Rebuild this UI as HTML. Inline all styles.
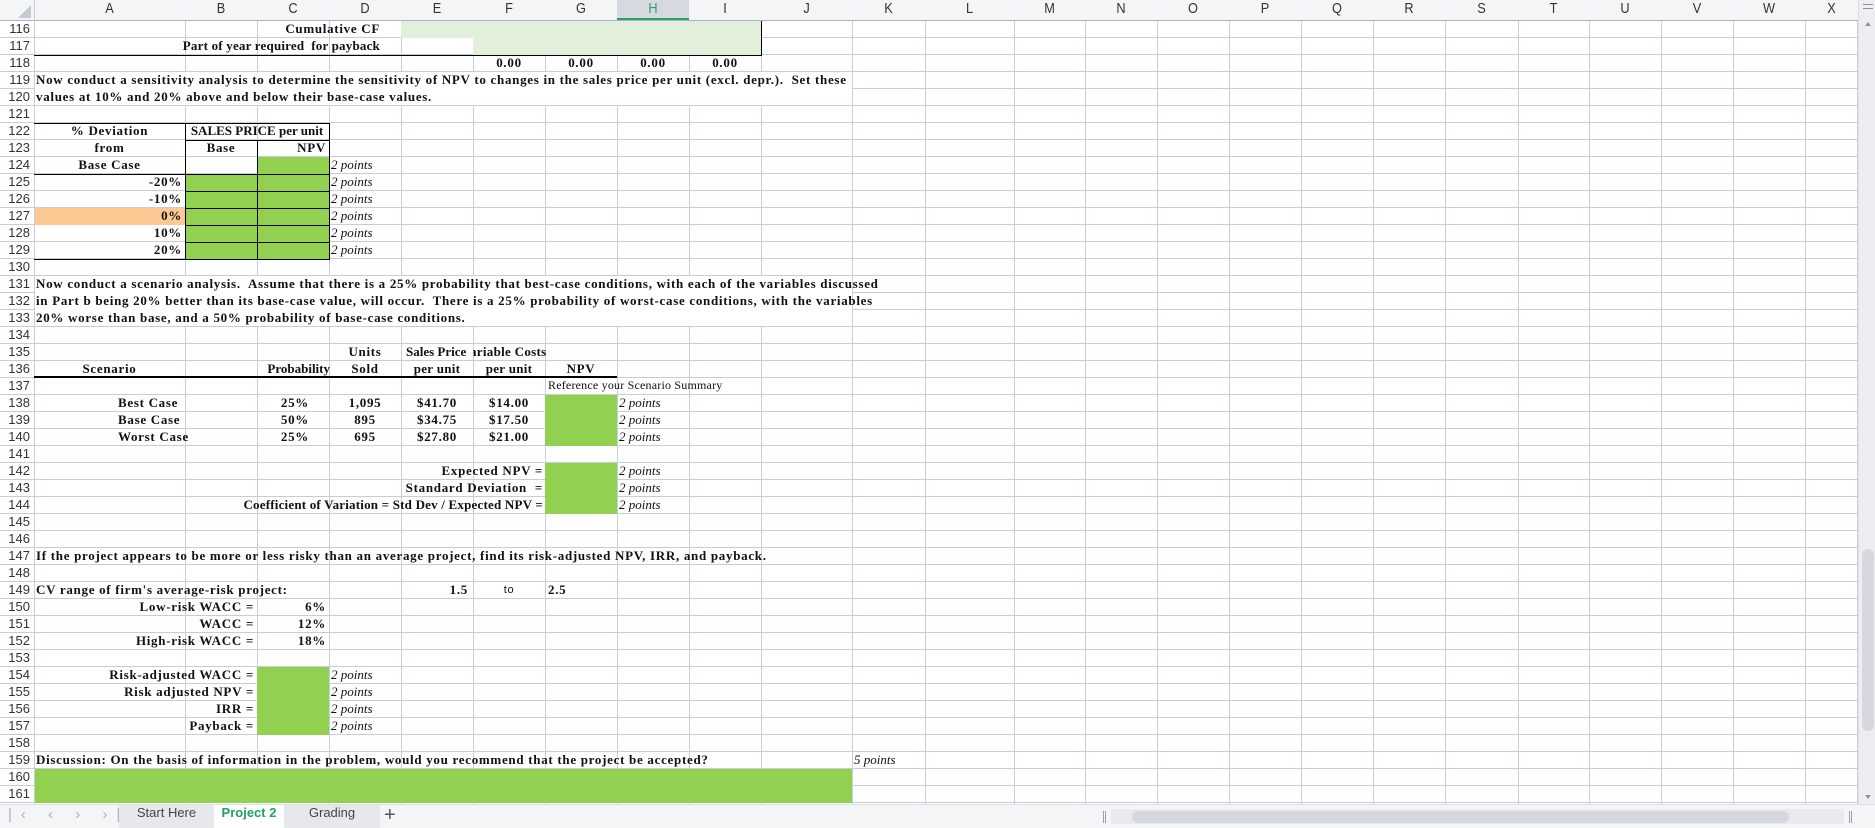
<!DOCTYPE html>
<html><head><meta charset="utf-8"><style>
*{margin:0;padding:0;box-sizing:border-box}
body{width:1875px;height:828px;overflow:hidden;background:#fff;position:relative;font-family:"Liberation Serif",serif}
.a{position:absolute}
.t{position:absolute;height:17px;line-height:17px;font:bold 13px "Liberation Serif",serif;letter-spacing:0.7px;white-space:nowrap;color:#111}
.i{position:absolute;height:17px;line-height:17px;font:italic 13px "Liberation Serif",serif;white-space:nowrap;color:#111;padding-left:2px}
.r{text-align:right;padding-right:3px}
.c{text-align:center}
.v{position:absolute;top:21px;height:783px;width:1px;background:#c8cedb}
.ch{position:absolute;top:0;height:21px;line-height:22px;font:15px "Liberation Sans",sans-serif;color:#333;text-align:center;transform:scaleX(.85)}
.rn{position:absolute;left:0;width:30px;height:17px;line-height:18px;font:13px "Liberation Sans",sans-serif;color:#333;text-align:right}
.g{position:absolute;background:#92d050}
.k{position:absolute;background:#000}
</style></head><body>
<div class="a" style="left:0;top:0;width:1858px;height:21px;background:#f4f5f7;border-bottom:1px solid #aab2c5"></div>
<div class="a" style="left:617px;top:0;width:72px;height:20px;background:#d6d9df"></div>
<div class="a" style="left:617px;top:18px;width:72px;height:2px;background:#21a366"></div>
<svg class="a" style="left:18px;top:5px" width="13" height="13"><polygon points="13,0 13,13 0,13" fill="#c4c8cf"/></svg>
<div class="a" style="left:0;top:21px;width:1858px;height:783px;background:repeating-linear-gradient(to bottom,transparent 0,transparent 16px,#c5ccda 16px,#c5ccda 17px)"></div>
<div class="a" style="left:34px;top:0;width:1px;height:804px;background:#c8cedb"></div>
<div class="v" style="left:185px"></div><div class="v" style="left:257px"></div><div class="v" style="left:329px"></div><div class="v" style="left:401px"></div><div class="v" style="left:473px"></div><div class="v" style="left:545px"></div><div class="v" style="left:617px"></div><div class="v" style="left:689px"></div><div class="v" style="left:761px"></div><div class="v" style="left:852px"></div><div class="v" style="left:925px"></div><div class="v" style="left:1014px"></div><div class="v" style="left:1085px"></div><div class="v" style="left:1157px"></div><div class="v" style="left:1229px"></div><div class="v" style="left:1301px"></div><div class="v" style="left:1373px"></div><div class="v" style="left:1445px"></div><div class="v" style="left:1518px"></div><div class="v" style="left:1589px"></div><div class="v" style="left:1661px"></div><div class="v" style="left:1733px"></div><div class="v" style="left:1805px"></div><div class="v" style="left:1857px"></div>
<div class="ch" style="left:34px;width:151px">A</div><div class="ch" style="left:185px;width:72px">B</div><div class="ch" style="left:257px;width:72px">C</div><div class="ch" style="left:329px;width:72px">D</div><div class="ch" style="left:401px;width:72px">E</div><div class="ch" style="left:473px;width:72px">F</div><div class="ch" style="left:545px;width:72px">G</div><div class="ch" style="left:617px;width:72px;color:#21a366">H</div><div class="ch" style="left:689px;width:72px">I</div><div class="ch" style="left:761px;width:91px">J</div><div class="ch" style="left:852px;width:73px">K</div><div class="ch" style="left:925px;width:89px">L</div><div class="ch" style="left:1014px;width:71px">M</div><div class="ch" style="left:1085px;width:72px">N</div><div class="ch" style="left:1157px;width:72px">O</div><div class="ch" style="left:1229px;width:72px">P</div><div class="ch" style="left:1301px;width:72px">Q</div><div class="ch" style="left:1373px;width:72px">R</div><div class="ch" style="left:1445px;width:73px">S</div><div class="ch" style="left:1518px;width:71px">T</div><div class="ch" style="left:1589px;width:72px">U</div><div class="ch" style="left:1661px;width:72px">V</div><div class="ch" style="left:1733px;width:72px">W</div><div class="ch" style="left:1805px;width:53px">X</div>
<div class="rn" style="top:21px">116</div><div class="rn" style="top:38px">117</div><div class="rn" style="top:55px">118</div><div class="rn" style="top:72px">119</div><div class="rn" style="top:89px">120</div><div class="rn" style="top:106px">121</div><div class="rn" style="top:123px">122</div><div class="rn" style="top:140px">123</div><div class="rn" style="top:157px">124</div><div class="rn" style="top:174px">125</div><div class="rn" style="top:191px">126</div><div class="rn" style="top:208px">127</div><div class="rn" style="top:225px">128</div><div class="rn" style="top:242px">129</div><div class="rn" style="top:259px">130</div><div class="rn" style="top:276px">131</div><div class="rn" style="top:293px">132</div><div class="rn" style="top:310px">133</div><div class="rn" style="top:327px">134</div><div class="rn" style="top:344px">135</div><div class="rn" style="top:361px">136</div><div class="rn" style="top:378px">137</div><div class="rn" style="top:395px">138</div><div class="rn" style="top:412px">139</div><div class="rn" style="top:429px">140</div><div class="rn" style="top:446px">141</div><div class="rn" style="top:463px">142</div><div class="rn" style="top:480px">143</div><div class="rn" style="top:497px">144</div><div class="rn" style="top:514px">145</div><div class="rn" style="top:531px">146</div><div class="rn" style="top:548px">147</div><div class="rn" style="top:565px">148</div><div class="rn" style="top:582px">149</div><div class="rn" style="top:599px">150</div><div class="rn" style="top:616px">151</div><div class="rn" style="top:633px">152</div><div class="rn" style="top:650px">153</div><div class="rn" style="top:667px">154</div><div class="rn" style="top:684px">155</div><div class="rn" style="top:701px">156</div><div class="rn" style="top:718px">157</div><div class="rn" style="top:735px">158</div><div class="rn" style="top:752px">159</div><div class="rn" style="top:769px">160</div><div class="rn" style="top:786px">161</div>

<div class="a" style="left:401px;top:21px;width:360px;height:17px;background:#e2efda"></div>
<div class="a" style="left:473px;top:38px;width:288px;height:17px;background:#e2efda"></div>
<div class="a" style="left:35px;top:72px;width:817px;height:33px;background:#fff"></div>
<div class="a" style="left:35px;top:276px;width:817px;height:50px;background:#fff"></div>
<div class="a" style="left:35px;top:208px;width:150px;height:17px;background:#fdc993"></div>
<div class="g" style="left:257px;top:157px;width:72px;height:17px"></div>
<div class="g" style="left:185px;top:174px;width:144px;height:85px"></div>
<div class="g" style="left:545px;top:395px;width:72px;height:51px"></div>
<div class="g" style="left:545px;top:463px;width:72px;height:51px"></div>
<div class="g" style="left:257px;top:667px;width:72px;height:68px"></div>
<div class="g" style="left:35px;top:769px;width:817px;height:34px"></div>

<div class="k" style="left:34px;top:55px;width:728px;height:1px"></div>
<div class="k" style="left:761px;top:21px;width:1px;height:35px"></div>
<div class="k" style="left:34px;top:123px;width:296px;height:1px"></div>
<div class="k" style="left:185px;top:123px;width:1px;height:137px"></div>
<div class="k" style="left:329px;top:123px;width:1px;height:137px"></div>
<div class="k" style="left:185px;top:140px;width:145px;height:1px"></div>
<div class="k" style="left:257px;top:140px;width:1px;height:120px"></div>
<div class="k" style="left:34px;top:174px;width:296px;height:1px"></div>
<div class="k" style="left:185px;top:191px;width:145px;height:1px"></div>
<div class="k" style="left:185px;top:208px;width:145px;height:1px"></div>
<div class="k" style="left:185px;top:225px;width:145px;height:1px"></div>
<div class="k" style="left:185px;top:242px;width:145px;height:1px"></div>
<div class="k" style="left:34px;top:259px;width:296px;height:1px"></div>
<div class="k" style="left:34px;top:376px;width:583px;height:2px"></div>

<div class="t r" style="left:185px;top:21px;width:198px">Cumulative CF</div>
<div class="t r" style="left:150px;top:38px;width:233px;letter-spacing:0.2px">Part of year required&nbsp; for payback</div>
<div class="t c" style="left:473px;top:55px;width:72px">0.00</div><div class="t c" style="left:545px;top:55px;width:72px">0.00</div><div class="t c" style="left:617px;top:55px;width:72px">0.00</div><div class="t c" style="left:689px;top:55px;width:72px">0.00</div>
<div class="t" style="left:36px;top:72px">Now conduct a sensitivity analysis to determine the sensitivity of NPV to changes in the sales price per unit (excl. depr.).&nbsp; Set these</div>
<div class="t" style="left:36px;top:89px">values at 10% and 20% above and below their base-case values.</div>
<div class="t c" style="left:34px;top:123px;width:151px">% Deviation</div>
<div class="t c" style="left:185px;top:123px;width:144px;letter-spacing:0">SALES PRICE per unit</div>
<div class="t c" style="left:34px;top:140px;width:151px">from</div>
<div class="t c" style="left:185px;top:140px;width:72px">Base</div>
<div class="t r" style="left:257px;top:140px;width:72px">NPV</div>
<div class="t c" style="left:34px;top:157px;width:151px">Base Case</div>
<div class="t r" style="left:34px;top:174px;width:151px">-20%</div>
<div class="t r" style="left:34px;top:191px;width:151px">-10%</div>
<div class="t r" style="left:34px;top:208px;width:151px">0%</div>
<div class="t r" style="left:34px;top:225px;width:151px">10%</div>
<div class="t r" style="left:34px;top:242px;width:151px">20%</div>
<div class="i" style="left:329px;top:157px">2 points</div><div class="i" style="left:329px;top:174px">2 points</div><div class="i" style="left:329px;top:191px">2 points</div><div class="i" style="left:329px;top:208px">2 points</div><div class="i" style="left:329px;top:225px">2 points</div><div class="i" style="left:329px;top:242px">2 points</div>
<div class="t" style="left:36px;top:276px">Now conduct a scenario analysis.&nbsp; Assume that there is a 25% probability that best-case conditions, with each of the variables discussed</div>
<div class="t" style="left:36px;top:293px">in Part b being 20% better than its base-case value, will occur.&nbsp; There is a 25% probability of worst-case conditions, with the variables</div>
<div class="t" style="left:36px;top:310px">20% worse than base, and a 50% probability of base-case conditions.</div>
<div class="t c" style="left:329px;top:344px;width:72px">Units</div>
<div class="t" style="left:406px;top:344px;width:67px;overflow:hidden;letter-spacing:0">Sales Price</div>
<div class="t" style="left:473px;top:344px;width:100px;overflow:hidden;text-indent:-3px;letter-spacing:0.3px">ariable Costs</div>
<div class="t c" style="left:34px;top:361px;width:151px">Scenario</div>
<div class="t r" style="left:240px;top:361px;width:92px;padding-right:2px;letter-spacing:0">Probability</div>
<div class="t c" style="left:329px;top:361px;width:72px">Sold</div>
<div class="t c" style="left:401px;top:361px;width:72px;letter-spacing:0.3px">per unit</div>
<div class="t c" style="left:473px;top:361px;width:72px;letter-spacing:0.3px">per unit</div>
<div class="t c" style="left:545px;top:361px;width:72px">NPV</div>
<div class="t" style="left:548px;top:378px;font-weight:normal;font-size:12px;letter-spacing:0.2px">Reference your Scenario Summary</div>
<div class="t" style="left:118px;top:395px">Best Case</div><div class="t" style="left:118px;top:412px">Base Case</div><div class="t" style="left:118px;top:429px">Worst Case</div>
<div class="t r" style="left:257px;top:395px;width:72px;padding-right:20px">25%</div><div class="t r" style="left:257px;top:412px;width:72px;padding-right:20px">50%</div><div class="t r" style="left:257px;top:429px;width:72px;padding-right:20px">25%</div>
<div class="t c" style="left:329px;top:395px;width:72px">1,095</div><div class="t c" style="left:329px;top:412px;width:72px">895</div><div class="t c" style="left:329px;top:429px;width:72px">695</div>
<div class="t c" style="left:401px;top:395px;width:72px">$41.70</div><div class="t c" style="left:401px;top:412px;width:72px">$34.75</div><div class="t c" style="left:401px;top:429px;width:72px">$27.80</div>
<div class="t c" style="left:473px;top:395px;width:72px">$14.00</div><div class="t c" style="left:473px;top:412px;width:72px">$17.50</div><div class="t c" style="left:473px;top:429px;width:72px">$21.00</div>
<div class="i" style="left:617px;top:395px">2 points</div><div class="i" style="left:617px;top:412px">2 points</div><div class="i" style="left:617px;top:429px">2 points</div>
<div class="t r" style="left:150px;top:463px;width:395px;padding-right:2px">Expected NPV =</div>
<div class="t r" style="left:150px;top:480px;width:395px;padding-right:2px">Standard Deviation&nbsp; =</div>
<div class="t r" style="left:150px;top:497px;width:395px;padding-right:2px;letter-spacing:0.2px">Coefficient of Variation = Std Dev / Expected NPV =</div>
<div class="i" style="left:617px;top:463px">2 points</div><div class="i" style="left:617px;top:480px">2 points</div><div class="i" style="left:617px;top:497px">2 points</div>
<div class="t" style="left:36px;top:548px">If the project appears to be more or less risky than an average project, find its risk-adjusted NPV, IRR, and payback.</div>
<div class="t" style="left:36px;top:582px">CV range of firm's average-risk project:</div>
<div class="t r" style="left:401px;top:582px;width:72px;padding-right:5px">1.5</div>
<div class="t c" style="left:473px;top:582px;width:72px;font:11px 'Liberation Sans',sans-serif;line-height:17px">to</div>
<div class="t" style="left:548px;top:582px">2.5</div>
<div class="t r" style="left:34px;top:599px;width:223px">Low-risk WACC =</div><div class="t r" style="left:34px;top:616px;width:223px">WACC =</div><div class="t r" style="left:34px;top:633px;width:223px">High-risk WACC =</div>
<div class="t r" style="left:257px;top:599px;width:72px">6%</div><div class="t r" style="left:257px;top:616px;width:72px">12%</div><div class="t r" style="left:257px;top:633px;width:72px">18%</div>
<div class="t r" style="left:34px;top:667px;width:223px">Risk-adjusted WACC =</div><div class="t r" style="left:34px;top:684px;width:223px">Risk adjusted NPV =</div><div class="t r" style="left:34px;top:701px;width:223px">IRR =</div><div class="t r" style="left:34px;top:718px;width:223px">Payback =</div>
<div class="i" style="left:329px;top:667px">2 points</div><div class="i" style="left:329px;top:684px">2 points</div><div class="i" style="left:329px;top:701px">2 points</div><div class="i" style="left:329px;top:718px">2 points</div>
<div class="t" style="left:36px;top:752px">Discussion: On the basis of information in the problem, would you recommend that the project be accepted?</div>
<div class="i" style="left:852px;top:752px">5 points</div>

<div class="a" style="left:1858px;top:0;width:17px;height:804px;background:#eceef2;border-left:1px solid #dde0e6"></div>
<div class="a" style="left:1863px;top:4px;width:10px;height:1px;background:#8c93a3"></div>
<div class="a" style="left:1863px;top:8px;width:10px;height:1px;background:#8c93a3"></div>
<div class="a" style="left:1862px;top:549px;width:12px;height:182px;background:#d5d8df;border-radius:6px"></div>
<svg class="a" style="left:1865px;top:22px" width="6" height="4"><polygon points="3,0 6,4 0,4" fill="#8c93a3"/></svg>
<svg class="a" style="left:1865px;top:795px" width="6" height="4"><polygon points="0,0 6,0 3,4" fill="#8c93a3"/></svg>
<div class="a" style="left:0;top:804px;width:1875px;height:24px;background:#f4f5f7;border-top:1px solid #dde0e6"></div>
<div class="a" style="left:8px;top:806px;font:15px 'Liberation Sans',sans-serif;color:#aab0bd;letter-spacing:9px">|‹ ‹ › ›|</div>
<div class="a" style="left:119px;top:805px;width:95px;height:23px;background:#e6e8ec"></div>
<div class="a" style="left:119px;top:805px;width:95px;height:23px;line-height:23px;text-align:center;font:13px 'Liberation Sans',sans-serif;color:#444">Start Here</div>
<div class="a" style="left:214px;top:805px;width:70px;height:23px;background:#fff;line-height:23px;text-align:center;font:bold 13px 'Liberation Sans',sans-serif;color:#21a366">Project 2</div>
<div class="a" style="left:284px;top:805px;width:96px;height:23px;background:#e6e8ec;line-height:23px;text-align:center;font:13px 'Liberation Sans',sans-serif;color:#444">Grading</div>
<div class="a" style="left:384px;top:804px;font:20px 'Liberation Sans',sans-serif;color:#555">+</div>
<div class="a" style="left:1103px;top:811px;width:1px;height:12px;background:#9aa0ad"></div>
<div class="a" style="left:1105px;top:811px;width:1px;height:12px;background:#9aa0ad"></div>
<div class="a" style="left:1111px;top:809px;width:733px;height:15px;background:#e8eaee"></div>
<div class="a" style="left:1132px;top:811px;width:657px;height:12px;background:#d5d7df;border-radius:6px"></div>
<div class="a" style="left:1849px;top:811px;width:1px;height:12px;background:#9aa0ad"></div>
<div class="a" style="left:1851px;top:811px;width:1px;height:12px;background:#9aa0ad"></div>
</body></html>
